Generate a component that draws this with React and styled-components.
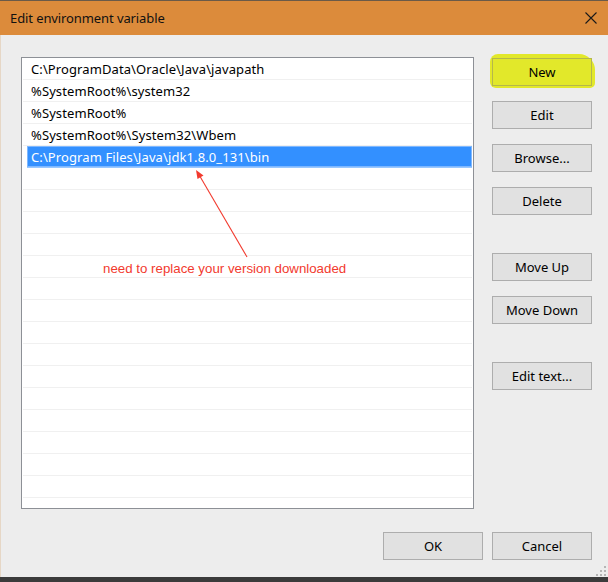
import React from "react";
import styled, { createGlobalStyle } from "styled-components";

const Global = createGlobalStyle`
  html, body { margin: 0; padding: 0; background: #ededed; }
  body { font-family: "Noto Sans", "Open Sans", sans-serif; }
  * { box-sizing: border-box; }
`;

const Window = styled.div`
  position: relative;
  width: 608px;
  height: 582px;
  display: flex;
  flex-direction: column;
  overflow: hidden;
  background: #ededed;
`;

const TitleBar = styled.div`
  height: 35px;
  flex: none;
  display: flex;
  align-items: center;
  justify-content: space-between;
  padding: 0 11px 0 10px;
  background: #dc8b3b;
  border-top: 1px solid #6b5a48;
`;

const Title = styled.span`
  font-size: 13px;
  color: #111;
  letter-spacing: -0.1px;
`;

const CloseIcon = styled.svg`
  width: 12px;
  height: 12px;
  display: block;
`;

const Body = styled.div`
  flex: 1;
  display: flex;
  flex-direction: column;
  padding: 22px 16px 0 20px;
  border-left: 1px solid #e6d7c6;
`;

const Main = styled.div`
  display: flex;
  gap: 18px;
`;

const List = styled.div`
  width: 453px;
  height: 452px;
  flex: none;
  border: 1px solid #8d9096;
  background: #fff;
  padding: 0 1px;
  overflow: hidden;
`;

const Row = styled.div`
  height: 22px;
  display: flex;
  align-items: center;
  padding: 1px 0 0 8px;
  border-bottom: 1px solid #f0f0f0;
  font-size: 13px;
  letter-spacing: 0.1px;
  color: #000;
  white-space: nowrap;
  ${(p) =>
    p.$selected &&
    `
    margin-left: 4px;
    padding-left: 4px;
    background: #3390ff;
    color: #fff;
    border-bottom-color: #99c8ff;
    box-shadow: inset 0 0 0 1px #7fb8ff;
  `}
`;

const ButtonColumn = styled.div`
  display: flex;
  flex-direction: column;
  padding-top: 1px;
`;

const Button = styled.button`
  position: relative;
  width: 100px;
  height: 28px;
  flex: none;
  margin-top: ${(p) => (p.$group ? "38px" : p.$first ? "0" : "15px")};
  border: 1px solid #adadad;
  background: #e1e1e1;
  font-family: "Noto Sans", "Open Sans", sans-serif;
  font-size: 13px;
  color: #000;
  padding: 0;
  ${(p) =>
    p.$highlight &&
    `
    z-index: 0;
    background: #e3e72a;
    &::before {
      content: "";
      position: absolute;
      left: -3px;
      right: -4px;
      top: -5px;
      bottom: -3px;
      background: #e2e82a;
      border-radius: 8px 16px 5px 6px;
      z-index: -1;
    }
    &::after {
      content: "";
      position: absolute;
      inset: -1px;
      border: 1px solid #b4b74c;
    }
  `}
`;

const Footer = styled.div`
  display: flex;
  justify-content: flex-end;
  gap: 9px;
  margin-top: 23px;
`;

const BottomStrip = styled.div`
  height: 5px;
  flex: none;
  background: #3b3b3b;
`;

const Annotation = styled.div`
  position: absolute;
  left: 103px;
  top: 261px;
  font-family: "Liberation Sans", Arial, sans-serif;
  font-size: 13.3px;
  color: #f23a2e;
  white-space: nowrap;
`;

const ArrowSvg = styled.svg`
  position: absolute;
  left: 190px;
  top: 165px;
  width: 65px;
  height: 100px;
  overflow: visible;
`;

const Grip = styled.svg`
  position: absolute;
  right: 2px;
  bottom: 6px;
  width: 10px;
  height: 10px;
`;

const items = [
  "C:\\ProgramData\\Oracle\\Java\\javapath",
  "%SystemRoot%\\system32",
  "%SystemRoot%",
  "%SystemRoot%\\System32\\Wbem",
  "C:\\Program Files\\Java\\jdk1.8.0_131\\bin",
];

export default function App() {
  const rows = [...items];
  while (rows.length < 21) rows.push("");
  return (
    <>
      <Global />
      <Window>
        <TitleBar>
          <Title>Edit environment variable</Title>
          <CloseIcon viewBox="0 0 12 12">
            <path d="M0.5 0.5 L11.5 11.5 M11.5 0.5 L0.5 11.5" stroke="#1a1a1a" strokeWidth="1.1" fill="none" />
          </CloseIcon>
        </TitleBar>
        <Body>
          <Main>
            <List>
              {rows.map((t, i) => (
                <Row key={i} $selected={i === 4}>
                  {t}
                </Row>
              ))}
            </List>
            <ButtonColumn>
              <Button $first $highlight>New</Button>
              <Button>Edit</Button>
              <Button>Browse...</Button>
              <Button>Delete</Button>
              <Button $group>Move Up</Button>
              <Button>Move Down</Button>
              <Button $group>Edit text...</Button>
            </ButtonColumn>
          </Main>
          <Footer>
            <Button $first>OK</Button>
            <Button $first>Cancel</Button>
          </Footer>
        </Body>
        <BottomStrip />
        <ArrowSvg viewBox="0 0 65 100">
          <line x1="57" y1="92" x2="8" y2="8" stroke="#f23a2e" strokeWidth="1.1" />
          <path d="M6 5 L7.5 14 L13.5 10.5 Z" fill="#f23a2e" />
        </ArrowSvg>
        <Annotation>need to replace your version downloaded</Annotation>
        <Grip viewBox="0 0 10 10">
          <g fill="#b5b5b5">
            <rect x="8" y="0" width="2" height="2" />
            <rect x="4" y="4" width="2" height="2" />
            <rect x="8" y="4" width="2" height="2" />
            <rect x="0" y="8" width="2" height="2" />
            <rect x="4" y="8" width="2" height="2" />
            <rect x="8" y="8" width="2" height="2" />
          </g>
        </Grip>
      </Window>
    </>
  );
}
